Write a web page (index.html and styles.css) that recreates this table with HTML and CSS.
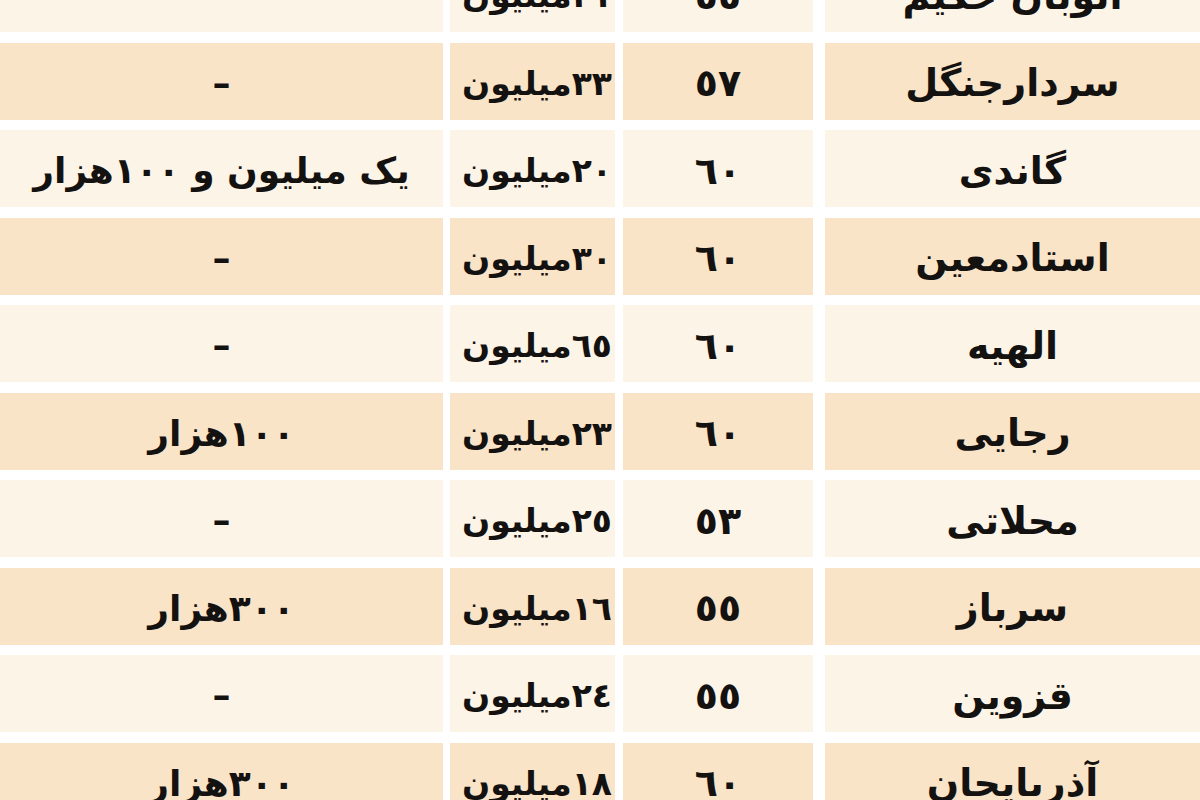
FILE: index.html
```html
<!DOCTYPE html>
<html lang="fa" dir="rtl">
<head>
<meta charset="utf-8">
<link rel="stylesheet" href="styles.css">
<title>جدول</title>
</head>
<body>
<div class="frame">
  <div class="table">
    <div class="row light"><div class="c name">اتوبان حکیم</div><div class="c age">٥٥</div><div class="c price">٢١میلیون</div><div class="c extra">–</div></div>
    <div class="row dark"><div class="c name">سردارجنگل</div><div class="c age">٥٧</div><div class="c price">٣٣میلیون</div><div class="c extra">–</div></div>
    <div class="row light"><div class="c name">گاندی</div><div class="c age">٦٠</div><div class="c price">٢٠میلیون</div><div class="c extra">یک میلیون و ١٠٠هزار</div></div>
    <div class="row dark"><div class="c name">استادمعین</div><div class="c age">٦٠</div><div class="c price">٣٠میلیون</div><div class="c extra">–</div></div>
    <div class="row light"><div class="c name">الهیه</div><div class="c age">٦٠</div><div class="c price">٦٥میلیون</div><div class="c extra">–</div></div>
    <div class="row dark"><div class="c name">رجایی</div><div class="c age">٦٠</div><div class="c price">٢٣میلیون</div><div class="c extra">١٠٠هزار</div></div>
    <div class="row light"><div class="c name">محلاتی</div><div class="c age">٥٣</div><div class="c price">٢٥میلیون</div><div class="c extra">–</div></div>
    <div class="row dark"><div class="c name">سرباز</div><div class="c age">٥٥</div><div class="c price">١٦میلیون</div><div class="c extra">٣٠٠هزار</div></div>
    <div class="row light"><div class="c name">قزوین</div><div class="c age">٥٥</div><div class="c price">٢٤میلیون</div><div class="c extra">–</div></div>
    <div class="row dark"><div class="c name">آذربایجان</div><div class="c age">٦٠</div><div class="c price">١٨میلیون</div><div class="c extra">٣٠٠هزار</div></div>
  </div>
</div>
</body>
</html>
```
FILE: styles.css
```css
html, body {
  margin: 0;
  padding: 0;
  background: #ffffff;
}
.frame {
  width: 1200px;
  height: 800px;
  overflow: hidden;
}
.table {
  margin-top: -45px;
  display: flex;
  flex-direction: column;
  gap: 10.5px;
  font-family: "DejaVu Sans", "Noto Sans", sans-serif;
  font-weight: bold;
  font-size: 36px;
  color: #141210;
}
.row {
  display: flex;
  direction: rtl;
  height: 77px;
}
.c {
  display: flex;
  align-items: center;
  justify-content: center;
  white-space: nowrap;
  padding-top: 4px;
  box-sizing: border-box;
}
.name { width: 375px; margin-left: 12px; font-size: 38px; }
.age { width: 190px; margin-left: 8px; font-size: 38px; }
.price { width: 165px; margin-left: 7px; justify-content: flex-start; padding-right: 3px; font-size: 33px; letter-spacing: -0.5px; }
.extra { width: 443px; }
.light .c { background: #fdf4e8; }
.dark .c { background: #fae4c8; }
```
